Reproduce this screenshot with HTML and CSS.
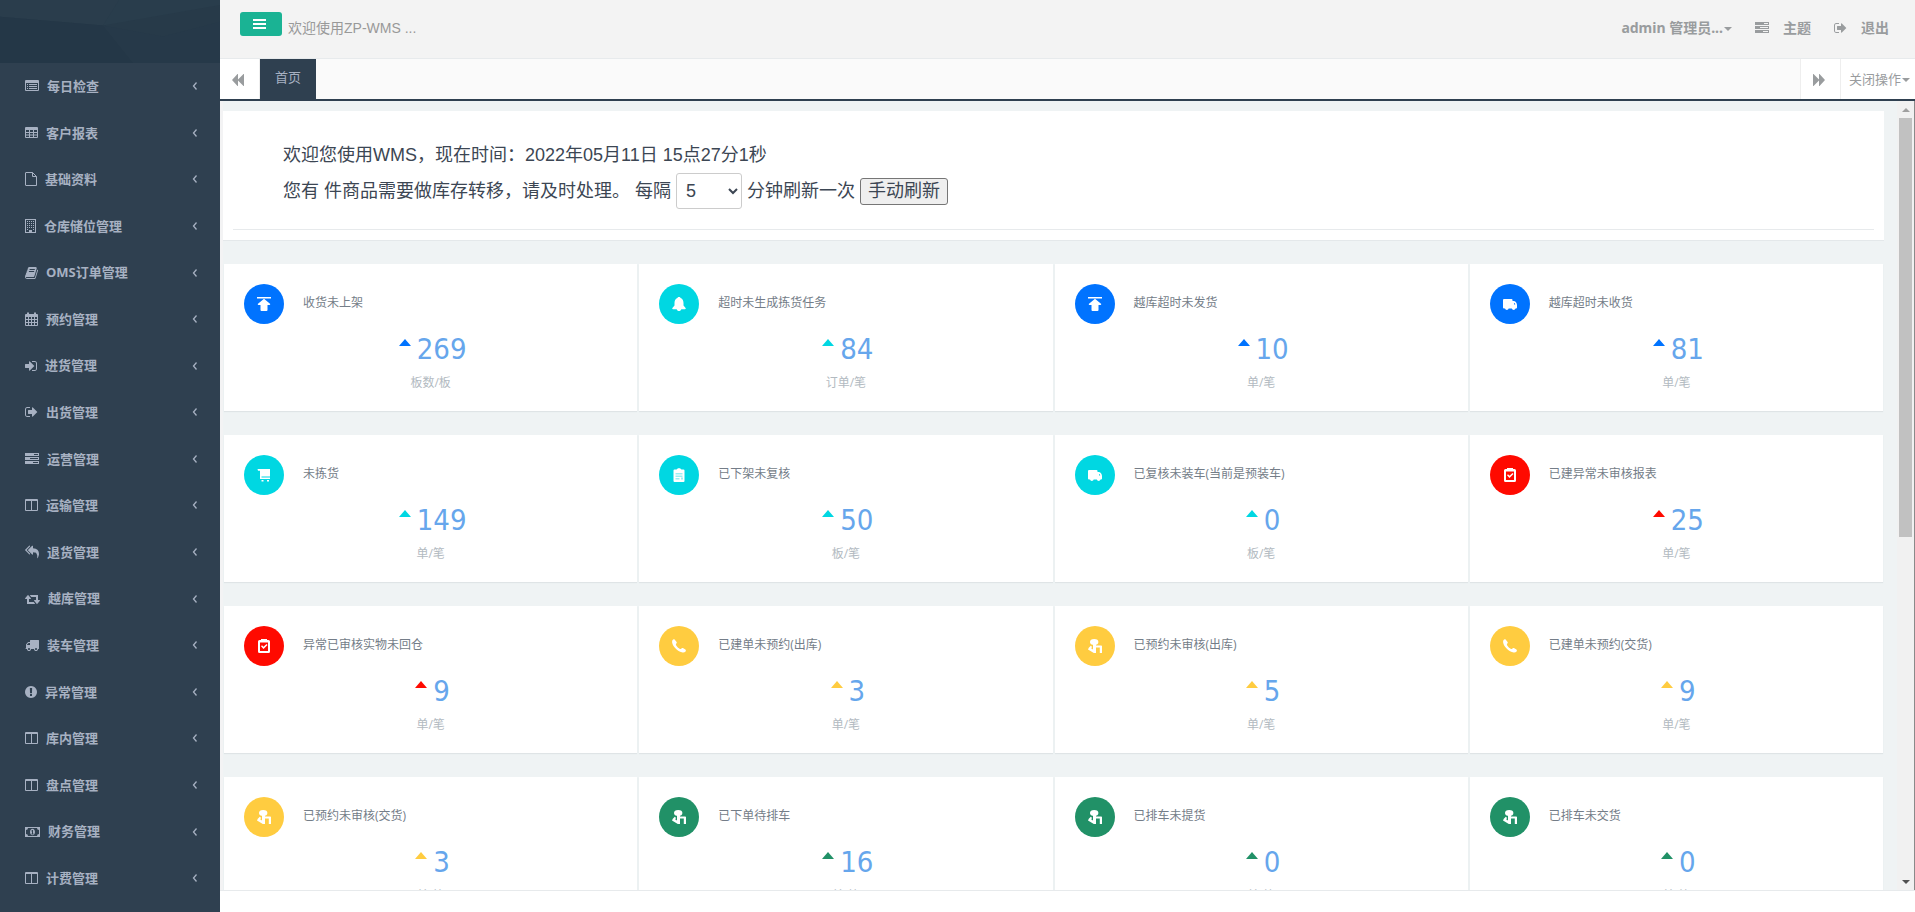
FILE: index.html
```html
<!DOCTYPE html>
<html lang="zh-CN">
<head>
<meta charset="utf-8">
<title>ZP-WMS</title>
<link rel="stylesheet" href="styles.css">
</head>
<body>
<svg class="sprite" aria-hidden="true">
  <symbol id="i-list" viewBox="0 0 14 14"><path fill-rule="evenodd" d="M1 1h12a1 1 0 0 1 1 1v9a1 1 0 0 1-1 1H1a1 1 0 0 1-1-1V2a1 1 0 0 1 1-1zM1 4v7h12V4zM2 5h1v1H2zM4 5h8v1H4zM2 7h1v1H2zM4 7h8v1H4zM2 9h1v1H2zM4 9h8v1H4z"/></symbol>
  <symbol id="i-table" viewBox="0 0 13 14"><path fill-rule="evenodd" d="M1 1h11a1 1 0 0 1 1 1v9a1 1 0 0 1-1 1H1a1 1 0 0 1-1-1V2a1 1 0 0 1 1-1zM1 4v2h3V4zM5 4v2h3V4zM9 4v2h3V4zM1 7v1.500h3V7zM5 7v1.500h3V7zM9 7v1.500h3V7zM1 9.500V11h3V9.500zM5 9.500V11h3V9.500zM9 9.500V11h3V9.500z"/></symbol>
  <symbol id="i-file" viewBox="0 0 12 14"><path d="M1 .5h6.500l4 4v9H1a.5.5 0 0 1-.5-.5V1A.5.5 0 0 1 1 .5zM7.500.500v4h4" fill="none" stroke="currentColor"/></symbol>
  <symbol id="i-building" viewBox="0 0 11 14"><path fill-rule="evenodd" d="M0 0h11v14H0zM1 1v12h3v-2h3v2h3V1zM2 2h1v1H2zM4 2h1v1H4zM6 2h1v1H6zM8 2h1v1H8zM2 4h1v1H2zM4 4h1v1H4zM6 4h1v1H6zM8 4h1v1H8zM2 6h1v1H2zM4 6h1v1H4zM6 6h1v1H6zM8 6h1v1H8zM2 8h1v1H2zM4 8h1v1H4zM6 8h1v1H6zM8 8h1v1H8zM2 10h1v1H2zM8 10h1v1H8z"/></symbol>
  <symbol id="i-book" viewBox="64 0 1664 1792"><path d="M1703 478q40 57 18 129l-275 906q-19 64-76.500 107.500t-122.500 43.500h-923q-77 0-148.500-53.500t-99.500-131.500q-24-67-2-127 0-4 3-27t4-37q1-8-3-21.500t-3-19.500q2-11 8-21t16.500-23.500 16.500-23.500q23-38 45-91.500t30-91.500q3-10 .5-30t-.5-28q3-11 17-28t17-23q21-36 42-92t25-90q1-9-2.500-32t.5-28q4-13 22-30.500t22-22.500q19-26 42.500-84.500t27.500-96.500q1-8-3-25.500t-2-26.500q2-8 9-18t18-23 17-21q8-12 16.500-30.500t15-35 16-36 19.500-32 26.500-23.500 36-11.500 47.500 5.500l-1 3q38-9 51-9h761q74 0 114 56t18 130l-274 906q-36 119-71.500 153.500t-128.500 34.500h-869q-27 0-38 15-11 16-1 43 24 70 144 70h923q29 0 56-15.500t35-41.500l300-987q7-22 5-57 38 15 59 43zm-1064 2q-4 13 2 22.500t20 9.500h608q13 0 25.500-9.500t16.500-22.500l21-64q4-13-2-22.500t-20-9.500h-608q-13 0-25.500 9.500t-16.500 22.500zm-83 256q-4 13 2 22.500t20 9.500h608q13 0 25.500-9.500t16.500-22.500l21-64q4-13-2-22.500t-20-9.500h-608q-13 0-25.500 9.500t-16.500 22.500z"/></symbol>
  <symbol id="i-calendar" viewBox="0 0 13 14"><path fill-rule="evenodd" d="M1 2h1V.5h2V2h5V.5h2V2h1a1 1 0 0 1 1 1v10a1 1 0 0 1-1 1H1a1 1 0 0 1-1-1V3a1 1 0 0 1 1-1zM1 5v2h2V5zM4 5v2h2V5zM7 5v2h2V5zM10 5v2h2V5zM1 8v2h2V8zM4 8v2h2V8zM7 8v2h2V8zM10 8v2h2V8zM1 11v2h2v-2zM4 11v2h2v-2zM7 11v2h2v-2zM10 11v2h2v-2z"/></symbol>
  <symbol id="i-in" viewBox="128 0 1536 1792"><path d="M1312 896q0 26-19 45l-544 544q-19 19-45 19t-45-19-19-45v-288h-448q-26 0-45-19t-19-45v-384q0-26 19-45t45-19h448v-288q0-26 19-45t45-19 45 19l544 544q19 19 19 45zm352-352v704q0 119-84.500 203.500t-203.500 84.500h-320q-13 0-22.500-9.500t-9.500-22.500q0-4-1-20t-.5-26.500 3-23.500 10-19.500 20.500-6.500h320q66 0 113-47t47-113v-704q0-66-47-113t-113-47h-312l-11.500-1-11.500-3-8-5.500-7-9-2-13.500q0-4-1-20t-.5-26.500 3-23.500 10-19.500 20.500-6.500h320q119 0 203.500 84.500t84.500 203.500z"/></symbol>
  <symbol id="i-out" viewBox="64 0 1664 1792"><path d="M704 1440q0 4 1 20t.5 26.500-3 23.500-10 19.500-20.500 6.500h-320q-119 0-203.500-84.500t-84.500-203.500v-704q0-119 84.500-203.500t203.500-84.500h320q13 0 22.500 9.500t9.500 22.500q0 4 1 20t.5 26.500-3 23.500-10 19.500-20.500 6.500h-320q-66 0-113 47t-47 113v704q0 66 47 113t113 47h312l11.500 1 11.500 3 8 5.500 7 9 2 13.500zm928-544q0 26-19 45l-544 544q-19 19-45 19t-45-19-19-45v-288h-448q-26 0-45-19t-19-45v-384q0-26 19-45t45-19h448v-288q0-26 19-45t45-19 45 19l544 544q19 19 19 45z"/></symbol>
  <symbol id="i-tasks" viewBox="0 0 14 14"><path fill-rule="evenodd" d="M0 1h14v3H0zM9 2v1h4V2zM0 5h14v3H0zM5 6v1h8V6zM0 9h14v3H0zM8 10v1h5v-1z"/></symbol>
  <symbol id="i-columns" viewBox="0 0 13 14"><path fill-rule="evenodd" d="M1 1h11a1 1 0 0 1 1 1v10a1 1 0 0 1-1 1H1a1 1 0 0 1-1-1V2a1 1 0 0 1 1-1zM1 3v9h5V3zM7 3v9h5V3z"/></symbol>
  <symbol id="i-reply" viewBox="0 0 1792 1792"><path d="M640 1082v70q0 42-39 59-13 5-25 5-27 0-45-19l-512-512q-19-19-19-45t19-45l512-512q29-31 70-14 39 17 39 59v69l-397 398q-19 19-19 45t19 45zm1152 58q0 58-17 133.500t-38.500 138-48 125-40.500 90.500l-20 40q-8 17-28 17-6 0-9-1-25-8-23-34 43-400-106-565-64-71-170.500-110.500t-267.500-52.500v251q0 42-39 59-13 5-25 5-27 0-45-19l-512-512q-19-19-19-45t19-45l512-512q29-31 70-14 39 17 39 59v262q411 28 599 221 169 173 169 509z"/></symbol>
  <symbol id="i-retweet" viewBox="64 0 1920 1792"><path d="M1344 1504q0 13-9.500 22.500t-22.500 9.500h-960q-8 0-13.500-2t-9-7-5.500-8-3-11.500-1-11.500v-600h-192q-26 0-45-19t-19-45q0-24 15-41l320-384q19-22 49-22t49 22l320 384q15 17 15 41 0 26-19 45t-45 19h-192v384h576q16 0 25 11l160 192q7 10 7 21zm640-416q0 24-15 41l-320 384q-20 23-49 23t-49-23l-320-384q-15-17-15-41 0-26 19-45t45-19h192v-384h-576q-16 0-25-12l-160-192q-7-9-7-20 0-13 9.500-22.500t22.500-9.500h960q8 0 13.500 2t9 7 5.500 8 3 11.500 1 11.500v600h192q26 0 45 19t19 45z"/></symbol>
  <symbol id="i-truck" viewBox="0 0 1792 1792"><path d="M640 1408q0-52-38-90t-90-38-90 38-38 90 38 90 90 38 90-38 38-90zm-384-512h384v-256h-158q-13 0-22 9l-195 195q-9 9-9 22v30zm1280 512q0-52-38-90t-90-38-90 38-38 90 38 90 90 38 90-38 38-90zm256-1088v1024q0 15-4 26.500t-13.500 18.500-16.500 11.500-23.500 6-22.500 2-25.500 0-22.500-.5q0 106-75 181t-181 75-181-75-75-181h-384q0 106-75 181t-181 75-181-75-75-181h-64q-3 0-22.500.5t-25.500 0-22.500-2-23.500-6-16.500-11.500-13.500-18.500-4-26.500q0-26 19-45t45-19v-320q0-8-.5-35t0-38 2.500-34.500 6.500-37 14-30.500 22.500-30l198-198q19-19 50.500-32t58.500-13h160v-192q0-26 19-45t45-19h1024q26 0 45 19t19 45z"/></symbol>
  <symbol id="i-excl" viewBox="128 0 1536 1792"><path d="M896 128q209 0 385.500 103t279.500 279.500 103 385.500-103 385.500-279.500 279.500-385.500 103-385.500-103-279.500-279.500-103-385.500 103-385.500 279.500-279.500 385.500-103zm128 1247v-190q0-14-9-23.500t-22-9.500h-192q-13 0-23 10t-10 23v190q0 13 10 23t23 10h192q13 0 22-9.500t9-23.500zm-2-344l18-621q0-12-10-18-10-8-24-8h-220q-14 0-24 8-10 6-10 18l17 621q0 10 10 17.500t24 7.500h185q14 0 23.500-7.500t10.500-17.500z"/></symbol>
  <symbol id="i-money" viewBox="0 0 15 14"><path fill-rule="evenodd" d="M0 2h15v10H0zM3 3a2 2 0 0 1-2 2v4a2 2 0 0 1 2 2h9a2 2 0 0 1 2-2V5a2 2 0 0 1-2-2zM7.500 3.800c1.500 0 2.500 1.400 2.500 3.200s-1 3.200-2.500 3.200S5 8.800 5 7s1-3.200 2.500-3.200zM6.500 5.500v1H7v2h-.5v1h2v-1H8v-3.500h-.6z"/></symbol>
  <symbol id="i-bars" viewBox="0 0 13 12"><path d="M0 1h13v2H0zM0 5h13v2H0zM0 9h13v2H0z"/></symbol>
  <symbol id="i-back" viewBox="0 0 12 12"><path d="M6 0v5.500L11.500 0H12v12h-.5L6 6.500V12H5.500L0 6 5.500 0z"/></symbol>
  <symbol id="i-fwd" viewBox="0 0 12 12"><path d="M6 0v5.500L.5 0H0v12h.5L6 6.500V12h.5L12 6 6.500 0z"/></symbol>
  <symbol id="i-angle" viewBox="0 0 6 10"><path d="M4.500 1.500 1.500 5l3 3.500" fill="none" stroke="currentColor" stroke-width="1.300"/></symbol>

  <symbol id="c-up" viewBox="0 0 14 14"><path d="M0 0h14v1.500H0zM7 1.800l6 5c.4.400.2 1.200-.4 1.200H10.500v5a1 1 0 0 1-1 1h-5a1 1 0 0 1-1-1V8H1.400C.8 8 .6 7.200 1 6.800z"/></symbol>
  <symbol id="c-bell" viewBox="0 0 14 14"><path d="M7 0c1 0 1.400.6 1.600 1.100C10.700 1.900 11.500 4 11.500 6v2.500L13.600 11c.4.600.1 1.200-.6 1.200H9.300C9 13.400 8.200 14 7 14s-2-.6-2.300-1.800H1c-.7 0-1-.6-.6-1.200l2.100-2.500V6c0-2 .8-4.100 2.900-4.900C5.600.6 6 0 7 0z"/></symbol>
  <symbol id="c-truck" viewBox="0 0 14 14"><path fill-rule="evenodd" d="M1 2h7.500a1 1 0 0 1 1 1v1h1.500c1.800.5 3 2.300 3 4v2.500a1 1 0 0 1-1 1h-.5a1.900 1.900 0 0 1-3.700 0H5.700a1.900 1.900 0 0 1-3.700 0H1a1 1 0 0 1-1-1V3a1 1 0 0 1 1-1zM11 6v1.500h1.300c-.2-.7-.6-1.200-1-1.500z"/></symbol>
  <symbol id="c-cart" viewBox="0 0 14 14"><path fill-rule="evenodd" d="M.5 1H13v7.500H4.500v1H13V11H3V2.800H1zM4.500 12h2v1.500h-2zM10 12h2v1.500h-2z"/></symbol>
  <symbol id="c-board" viewBox="0 0 14 14"><path d="M2.500 1.500h2L6 .3h2l1.500 1.200h2a1 1 0 0 1 1 1V13a1 1 0 0 1-1 1h-9a1 1 0 0 1-1-1V2.500a1 1 0 0 1 1-1z"/><path d="M3.500 5h7v1.500h-7zM3.500 7.500h7V9h-7zM3.500 10h4v1.500h-4zM9 9.500h2v2H9z" fill="#00d7e2" opacity=".4"/></symbol>
  <symbol id="c-check" viewBox="0 0 14 14"><path fill-rule="evenodd" d="M4 0h6v1h1.500A1.500 1.500 0 0 1 13 2.500v10a1.500 1.500 0 0 1-1.500 1.500h-9A1.500 1.500 0 0 1 1 12.500v-10A1.500 1.500 0 0 1 2.500 1H4zM3 3.500v8.500h8V3.500zM4 7.300l1-1 1.500 1.400L9.500 5l1 1-4 4z"/></symbol>
  <symbol id="c-phone" viewBox="0 0 14 14"><path d="M.3 1.500C.8.500 2 .1 2.600.4L4.600 3c.4.600.2 1-.4 1.700-.5.600-.4 1 .2 2.100 1 1.600 2.200 2.500 3.500 3.100.6.200 1 .1 1.600-.5.500-.4.900-.5 1.400-.3l2.500 1.500c.5.400.7 1.300.1 2-.8.900-2.100 1.200-3.700.7C5.500 12 1.500 8.300.4 4.500c-.3-1.100-.4-2.100-.1-3z"/></symbol>
  <symbol id="c-hand" viewBox="0 0 14 14"><ellipse cx="6.200" cy="2.900" rx="4.200" ry="2.900"/><path d="M5 3h3v3.500h5.200a.8.800 0 0 1 .8.800V14h-2.200V8.500H8V14H5.800L0 10.500l.8-1.800 2-2 1.300 1.200-1 1.300L5 10.400z"/></symbol>
</svg>

<div class="app">
  <aside class="sidebar">
    <svg class="brand" viewBox="0 0 220 64" preserveAspectRatio="none" aria-hidden="true">
      <path d="M0 0h220v64H0z" fill="#273a49"/>
      <path d="M0 0h119l-16 26L0 17z" fill="#2a3d4c"/>
      <path d="M103 26 0 17v47h133z" fill="#243747"/>
      <path d="M119 0h101v5L103 26z" fill="#293d4c"/>
      <path d="m103 26 60 11 57-15v42h-87z" fill="#263949"/>
    </svg>
    <nav class="menu">
      <a href="#"><svg class="w14"><use href="#i-list"/></svg><span>每日检查</span><svg class="angle"><use href="#i-angle"/></svg></a>
      <a href="#"><svg class="w13"><use href="#i-table"/></svg><span>客户报表</span><svg class="angle"><use href="#i-angle"/></svg></a>
      <a href="#"><svg class="w12"><use href="#i-file"/></svg><span>基础资料</span><svg class="angle"><use href="#i-angle"/></svg></a>
      <a href="#"><svg class="w11"><use href="#i-building"/></svg><span>仓库储位管理</span><svg class="angle"><use href="#i-angle"/></svg></a>
      <a href="#"><svg class="w13"><use href="#i-book"/></svg><span>OMS订单管理</span><svg class="angle"><use href="#i-angle"/></svg></a>
      <a href="#"><svg class="w13"><use href="#i-calendar"/></svg><span>预约管理</span><svg class="angle"><use href="#i-angle"/></svg></a>
      <a href="#"><svg class="w12"><use href="#i-in"/></svg><span>进货管理</span><svg class="angle"><use href="#i-angle"/></svg></a>
      <a href="#"><svg class="w13"><use href="#i-out"/></svg><span>出货管理</span><svg class="angle"><use href="#i-angle"/></svg></a>
      <a href="#"><svg class="w14"><use href="#i-tasks"/></svg><span>运营管理</span><svg class="angle"><use href="#i-angle"/></svg></a>
      <a href="#"><svg class="w13"><use href="#i-columns"/></svg><span>运输管理</span><svg class="angle"><use href="#i-angle"/></svg></a>
      <a href="#"><svg class="w14"><use href="#i-reply"/></svg><span>退货管理</span><svg class="angle"><use href="#i-angle"/></svg></a>
      <a href="#"><svg class="w15"><use href="#i-retweet"/></svg><span>越库管理</span><svg class="angle"><use href="#i-angle"/></svg></a>
      <a href="#"><svg class="w14"><use href="#i-truck"/></svg><span>装车管理</span><svg class="angle"><use href="#i-angle"/></svg></a>
      <a href="#"><svg class="w12"><use href="#i-excl"/></svg><span>异常管理</span><svg class="angle"><use href="#i-angle"/></svg></a>
      <a href="#"><svg class="w13"><use href="#i-columns"/></svg><span>库内管理</span><svg class="angle"><use href="#i-angle"/></svg></a>
      <a href="#"><svg class="w13"><use href="#i-columns"/></svg><span>盘点管理</span><svg class="angle"><use href="#i-angle"/></svg></a>
      <a href="#"><svg class="w15"><use href="#i-money"/></svg><span>财务管理</span><svg class="angle"><use href="#i-angle"/></svg></a>
      <a href="#"><svg class="w13"><use href="#i-columns"/></svg><span>计费管理</span><svg class="angle"><use href="#i-angle"/></svg></a>
    </nav>
  </aside>

  <div class="main">
    <header class="topbar">
      <button class="toggle" type="button" aria-label="菜单"><svg><use href="#i-bars"/></svg></button>
      <span class="welcome">欢迎使用ZP-WMS ...</span>
      <div class="user">
        <a class="account" href="#">admin 管理员...<i class="caret"></i></a>
        <a class="action" href="#"><svg class="w14"><use href="#i-tasks"/></svg>主题</a>
        <a class="action" href="#"><svg class="w13"><use href="#i-out"/></svg>退出</a>
      </div>
    </header>

    <div class="tabs">
      <button class="roll left" type="button" aria-label="向左"><svg><use href="#i-back"/></svg></button>
      <a class="tab" href="#">首页</a>
      <button class="roll right" type="button" aria-label="向右"><svg><use href="#i-fwd"/></svg></button>
      <button class="close-ops" type="button">关闭操作<i class="caret"></i></button>
    </div>

    <div class="viewport">
      <main class="content">
        <section class="panel">
          <p class="line">欢迎您使用WMS，现在时间：2022年05月11日 15点27分1秒</p>
          <div class="line refresh">
            <label for="interval">您有 件商品需要做库存转移，请及时处理。 每隔</label>
            <select id="interval"><option>5</option><option>10</option></select>
            <span>分钟刷新一次</span>
            <button type="button">手动刷新</button>
          </div>
          <hr>
        </section>

        <section class="cards">
          <article class="card blue"><h2><i class="dot"><svg><use href="#c-up"/></svg></i>收货未上架</h2><p class="num">269</p><p class="unit">板数/板</p></article>
          <article class="card cyan"><h2><i class="dot"><svg><use href="#c-bell"/></svg></i>超时未生成拣货任务</h2><p class="num">84</p><p class="unit">订单/笔</p></article>
          <article class="card blue"><h2><i class="dot"><svg><use href="#c-up"/></svg></i>越库超时未发货</h2><p class="num">10</p><p class="unit">单/笔</p></article>
          <article class="card blue"><h2><i class="dot"><svg><use href="#c-truck"/></svg></i>越库超时未收货</h2><p class="num">81</p><p class="unit">单/笔</p></article>

          <article class="card cyan"><h2><i class="dot"><svg><use href="#c-cart"/></svg></i>未拣货</h2><p class="num">149</p><p class="unit">单/笔</p></article>
          <article class="card cyan"><h2><i class="dot"><svg><use href="#c-board"/></svg></i>已下架未复核</h2><p class="num">50</p><p class="unit">板/笔</p></article>
          <article class="card cyan"><h2><i class="dot"><svg><use href="#c-truck"/></svg></i>已复核未装车(当前是预装车)</h2><p class="num">0</p><p class="unit">板/笔</p></article>
          <article class="card red"><h2><i class="dot"><svg><use href="#c-check"/></svg></i>已建异常未审核报表</h2><p class="num">25</p><p class="unit">单/笔</p></article>

          <article class="card red"><h2><i class="dot"><svg><use href="#c-check"/></svg></i>异常已审核实物未回仓</h2><p class="num">9</p><p class="unit">单/笔</p></article>
          <article class="card yellow"><h2><i class="dot"><svg><use href="#c-phone"/></svg></i>已建单未预约(出库)</h2><p class="num">3</p><p class="unit">单/笔</p></article>
          <article class="card yellow"><h2><i class="dot"><svg><use href="#c-hand"/></svg></i>已预约未审核(出库)</h2><p class="num">5</p><p class="unit">单/笔</p></article>
          <article class="card yellow"><h2><i class="dot"><svg><use href="#c-phone"/></svg></i>已建单未预约(交货)</h2><p class="num">9</p><p class="unit">单/笔</p></article>

          <article class="card yellow"><h2><i class="dot"><svg><use href="#c-hand"/></svg></i>已预约未审核(交货)</h2><p class="num">3</p><p class="unit">单/笔</p></article>
          <article class="card green"><h2><i class="dot"><svg><use href="#c-hand"/></svg></i>已下单待排车</h2><p class="num">16</p><p class="unit">单/笔</p></article>
          <article class="card green"><h2><i class="dot"><svg><use href="#c-hand"/></svg></i>已排车未提货</h2><p class="num">0</p><p class="unit">单/笔</p></article>
          <article class="card green"><h2><i class="dot"><svg><use href="#c-hand"/></svg></i>已排车未交货</h2><p class="num">0</p><p class="unit">单/笔</p></article>
        </section>
      </main>
      <div class="scrollbar" aria-hidden="true"><i class="arrow up"></i><i class="thumb"></i><i class="arrow down"></i></div>
    </div>
    <footer class="footer"></footer>
  </div>
</div>
</body>
</html>
```
FILE: styles.css
```css
* { box-sizing: border-box; }

body {
  margin: 0;
  background: #2f4050;
  color: #676a6c;
  font: 13px/1.43 "Open Sans", "Noto Sans CJK SC", sans-serif;
}

a { color: inherit; text-decoration: none; }
button { font: inherit; color: inherit; cursor: pointer; }
h2, p { margin: 0; font-weight: 400; }
svg { fill: currentColor; flex: none; }

.sprite { display: none; }
.w11 { width: 11px; height: 14px; }
.w12 { width: 12px; height: 14px; }
.w13 { width: 13px; height: 14px; }
.w14 { width: 14px; height: 14px; }
.w15 { width: 15px; height: 14px; }

.app { display: flex; height: 100vh; overflow: hidden; }

/* sidebar */
.sidebar {
  flex: none;
  width: 220px;
  background: #2f4050;
  color: #a7b1c2;
}
.brand { display: block; width: 100%; height: 63px; }
.menu a {
  display: flex;
  align-items: center;
  gap: 8px;
  padding: 14px 22px 14px 25px;
  font-weight: 700;
}
.menu span { flex: 1; }
.angle { width: 6px; height: 10px; }

/* header */
.main { flex: 1; min-width: 0; display: flex; flex-direction: column; background: #f3f3f4; }
.topbar {
  flex: none;
  display: flex;
  height: 59px;
  padding: 12px 26px 0 20px;
  border-bottom: 1px solid #e7eaec;
  background: #f3f3f3;
  color: #999c9e;
}
.toggle {
  width: 42px;
  height: 24px;
  padding: 0 4px 0 0;
  border: 0;
  border-radius: 3px;
  background: #1ab394;
  color: #fff;
}
.toggle svg { width: 13px; height: 12px; display: block; margin: 0 auto; }
.welcome { margin: 5px 0 0 6px; font: 14px/22px "Liberation Sans", "Noto Sans CJK SC", sans-serif; color: #999; }
.user { display: flex; align-items: center; height: 32px; margin-left: auto; font-size: 14px; font-weight: 700; }
.account { margin-right: 23px; font-family: "Noto Sans", "Noto Sans CJK SC", sans-serif; }
.action { display: flex; align-items: center; gap: 14px; }
.action + .action { margin-left: 23px; }
.caret {
  display: inline-block;
  margin-left: 1px;
  vertical-align: middle;
  border: 4px solid transparent;
  border-top-color: currentColor;
  border-bottom: 0;
}

/* tabs */
.tabs {
  flex: none;
  display: flex;
  height: 42px;
  border-bottom: 2px solid #2f4050;
  background: #fafafa;
  color: #999c9e;
}
.tabs button { padding: 0; border: 0; background: #fff; }
.tabs svg { width: 12px; height: 12px; display: block; margin: 1px auto 0; }
.tabs .roll { width: 40px; padding-right: 3px; border-right: 1px solid #eee; }
.tabs .right { width: 41px; margin-left: auto; border-left: 1px solid #eee; }
.tab { padding: 0 15px; background: #2f4050; color: #a7b1c2; line-height: 37px; }
.tabs .close-ops { width: 74px; padding-left: 3px; }

/* content */
.viewport { flex: 1; min-height: 0; display: flex; overflow: hidden; }
.content {
  flex: 1;
  min-width: 0;
  margin-left: 3px;
  padding: 10px 13px 0 0;
  background: #eff3f4;
  overflow: hidden;
}
.panel {
  padding: 27px 10px 10px;
  margin-bottom: 23px;
  background: #fff;
  border-bottom: 1px solid #e4e8ea;
  color: #3c4653;
  font: 18px/35px "Liberation Sans", "Noto Sans CJK SC", sans-serif;
}
.line { padding-left: 50px; }
.refresh { display: flex; align-items: center; gap: 5px; }
.refresh select {
  width: 66px;
  height: 36px;
  padding: 0 5px;
  border: 1px solid #ccc;
  border-radius: 3px;
  background: #fff;
  color: inherit;
  font: inherit;
}
.refresh button {
  height: 27px;
  padding: 0 7px;
  border: 1px solid #767676;
  border-radius: 3px;
  background: #efefef;
  line-height: 24px;
}
.panel hr { margin: 20px 0 0; border: 0; border-top: 1px solid #e7eaec; }

.cards {
  display: grid;
  grid-template-columns: repeat(4, 1fr);
  gap: 24px 2px;
  padding: 0 1px;
}
.card {
  height: 147px;
  padding: 20px;
  background: #fff;
  box-shadow: 0 1px 1px #dfe4e6;
  text-align: center;
}
.card h2 { display: flex; gap: 19px; font-size: 12px; line-height: 38px; color: #747d88; }
.dot {
  display: grid;
  place-items: center;
  width: 40px;
  height: 40px;
  border-radius: 50%;
  background: var(--tone);
  color: #fff;
}
.dot svg { width: 14px; height: 14px; }
.num {
  display: flex;
  justify-content: center;
  gap: 6px;
  margin-top: 7px;
  padding-left: 4px;
  font: 29px/37px "DejaVu Sans Condensed", "DejaVu Sans", sans-serif;
  color: #66a6ec;
}
.num::before {
  content: "";
  align-self: flex-start;
  margin-top: 8px;
  border: 6px solid transparent;
  border-top: 0;
  border-bottom: 7px solid var(--tone);
}
.unit { margin-top: 6px; font-size: 12px; line-height: 18px; color: #b2bac1; }

.blue { --tone: #0073ff; }
.cyan { --tone: #00d7e2; }
.red { --tone: #ff0a00; }
.yellow { --tone: #ffcc40; }
.green { --tone: #219167; }

.scrollbar {
  flex: none;
  display: flex;
  flex-direction: column;
  align-items: center;
  width: 18px;
  padding: 7px 0 6px;
  background: #f1f1f1;
  border-right: 1px solid #8a8a8a;
}
.thumb { width: 13px; height: 54%; margin-top: 6px; background: #c1c1c1; }
.arrow { border: 4px solid transparent; }
.up { border-top: 0; border-bottom-color: #a0a0a0; }
.down { margin-top: auto; border-bottom: 0; border-top-color: #505050; }

.footer { flex: none; height: 22px; border-top: 1px solid #e7eaec; background: #fff; }
```
